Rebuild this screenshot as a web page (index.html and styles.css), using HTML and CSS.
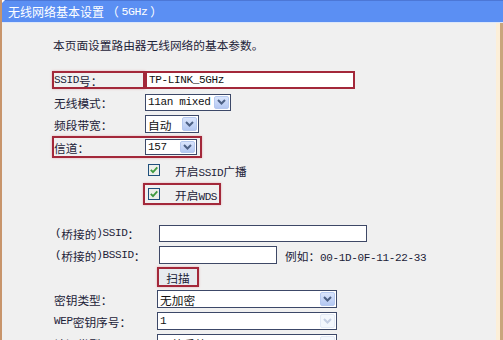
FILE: index.html
```html
<!DOCTYPE html>
<html lang="zh-CN">
<head>
<meta charset="utf-8">
<title>无线网络基本设置</title>
<link rel="stylesheet" href="styles.css">
</head>
<body>
<div class="page">
  <div class="header">无线网络基本设置 （ <span class="en">5GHz</span> ）</div>
  <div class="content">
    <p class="intro">本页面设置路由器无线网络的基本参数。</p>

    <div class="row">
      <span class="label hl"><span class="en">SSID</span>号：</span>
      <input class="field en ssid" value="TP-LINK_5GHz">
    </div>
    <div class="row">
      <span class="label">无线模式：</span>
      <div class="select w-mode"><span class="val en">11an mixed</span><span class="arrow"><svg width="9" height="6" viewBox="0 0 9 6"><path d="M1 1 L4.5 4.5 L8 1" fill="none" stroke="#4d6185" stroke-width="2"/></svg></span></div>
    </div>
    <div class="row">
      <span class="label">频段带宽：</span>
      <div class="select w-band"><span class="val">自动</span><span class="arrow"><svg width="9" height="6" viewBox="0 0 9 6"><path d="M1 1 L4.5 4.5 L8 1" fill="none" stroke="#4d6185" stroke-width="2"/></svg></span></div>
    </div>
    <div class="row tall">
      <div class="hl-group">
        <span class="label">信道：</span>
        <div class="select w-chan"><span class="val en">157</span><span class="arrow"><svg width="9" height="6" viewBox="0 0 9 6"><path d="M1 1 L4.5 4.5 L8 1" fill="none" stroke="#4d6185" stroke-width="2"/></svg></span></div>
      </div>
    </div>
    <div class="row check-row">
      <div class="check">
        <svg class="box" width="12" height="12" viewBox="0 0 12 12"><rect x="0.5" y="0.5" width="11" height="11" fill="#ecefea" stroke="#1f4f7c"/><path d="M2.8 5.8 L5 8.2 L9.3 3.4" fill="none" stroke="#3f9a3f" stroke-width="1.8"/></svg>
        <span>开启<span class="en">SSID</span>广播</span>
      </div>
    </div>
    <div class="row check-row taller">
      <div class="check hl">
        <svg class="box" width="12" height="12" viewBox="0 0 12 12"><rect x="0.5" y="0.5" width="11" height="11" fill="#ecefea" stroke="#1f4f7c"/><path d="M2.8 5.8 L5 8.2 L9.3 3.4" fill="none" stroke="#3f9a3f" stroke-width="1.8"/></svg>
        <span>开启<span class="en">WDS</span></span>
      </div>
    </div>

    <div class="row gap-top">
      <span class="label bridge"><span class="en">(</span>桥接的<span class="en">)SSID</span>：</span>
      <input class="field en w-bssid-name" value="">
    </div>
    <div class="row">
      <span class="label bridge"><span class="en">(</span>桥接的<span class="en">)BSSID</span>：</span>
      <input class="field en w-bssid" value="">
      <span class="hint">例如：<span class="en">00-1D-0F-11-22-33</span></span>
    </div>
    <div class="row">
      <button class="scan">扫描</button>
    </div>
    <div class="row">
      <span class="label key">密钥类型：</span>
      <div class="select w-key"><span class="val">无加密</span><span class="arrow"><svg width="9" height="6" viewBox="0 0 9 6"><path d="M1 1 L4.5 4.5 L8 1" fill="none" stroke="#4d6185" stroke-width="2"/></svg></span></div>
    </div>
    <div class="row">
      <span class="label key"><span class="en">WEP</span>密钥序号：</span>
      <div class="select w-key"><span class="val en">1</span><span class="arrow off"><svg width="9" height="6" viewBox="0 0 9 6"><path d="M1 1 L4.5 4.5 L8 1" fill="none" stroke="#c3cee2" stroke-width="2"/></svg></span></div>
    </div>
    <div class="row">
      <span class="label key">认证类型：</span>
      <div class="select w-key"><span class="val">开放系统</span><span class="arrow off"><svg width="9" height="6" viewBox="0 0 9 6"><path d="M1 1 L4.5 4.5 L8 1" fill="none" stroke="#c3cee2" stroke-width="2"/></svg></span></div>
    </div>
  </div>
</div>
</body>
</html>
```

FILE: styles.css
```css
html, body {
  margin: 0;
  padding: 0;
}

body {
  font-family: "Noto Sans CJK SC", sans-serif;
  font-size: 11.7px;
  color: #1c2238;
  background: #f0f0f0;
}

.en {
  font-family: "Liberation Mono", monospace;
  font-size: 11px;
  letter-spacing: -0.36px;
}

.page {
  position: relative;
  width: 503px;
  height: 340px;
  overflow: hidden;
  box-sizing: border-box;
  border-left: 2px solid #c8956b;
  display: flex;
  flex-direction: column;
}

.page::before {
  content: "";
  position: absolute;
  left: -2px;
  top: 0;
  border-top: 5px solid #ffffff;
  border-right: 5px solid transparent;
}

.header {
  flex: none;
  height: 23px;
  box-sizing: border-box;
  background: #5b8ff3;
  border-top: 1px solid #4c77d6;
  border-bottom: 1px solid #dce7fa;
  color: #ffffff;
  font-size: 12px;
  padding-left: 6px;
  display: flex;
  align-items: center;
  white-space: pre;
}

.header .en {
  font-size: 11.5px;
}

.content {
  flex: 1;
  border-right: 3px solid #c9a57c;
  box-shadow: inset -4px 0 0 #fcefd9;
  padding-left: 50px;
}

.intro {
  margin: 12px 0 14px;
  line-height: 20px;
  padding-left: 1px;
}

.row {
  display: flex;
  align-items: center;
  height: 22px;
}

.row.tall {
  height: 24px;
}

.row.taller {
  height: 26px;
}

.row.gap-top {
  margin-top: 15px;
}

.label {
  box-sizing: border-box;
  width: 93px;
  height: 18px;
  border: 2px solid transparent;
  display: flex;
  align-items: center;
  white-space: nowrap;
}

.label.hl,
.check.hl,
.hl-group,
.scan {
  border: 2px solid #a3283a;
  box-shadow: 0 0 2px rgba(220, 120, 130, 0.6);
}

.label.bridge {
  width: 107px;
  padding-left: 1px;
}

.label.key {
  width: 105px;
}

.field {
  box-sizing: border-box;
  height: 17px;
  border: 1px solid #3e4866;
  background: #ffffff;
  padding: 0 2px;
  margin: 0;
  color: #111;
  outline: none;
}

.field.ssid {
  width: 210px;
  height: 18px;
  border: 2px solid #a3283a;
}

.w-bssid-name {
  width: 208px;
}

.w-bssid {
  width: 118px;
  height: 18px;
}

.hint {
  margin-left: 8px;
  white-space: nowrap;
}

.select {
  box-sizing: border-box;
  display: flex;
  align-items: center;
  height: 18px;
  border: 1px solid #3c4868;
  background: #ffffff;
  padding-left: 2px;
  color: #111;
}

.select .val {
  flex: 1;
  white-space: nowrap;
}

.w-mode {
  width: 86px;
  height: 17px;
}

.w-band {
  width: 54px;
}

.w-chan {
  width: 52px;
  height: 16px;
}

.w-key {
  width: 180px;
}

.arrow {
  box-sizing: border-box;
  width: 15px;
  align-self: stretch;
  margin: 1px 1px 1px 0;
  border: 1px solid #b5c8ef;
  border-radius: 2px;
  background: linear-gradient(#dae5fc, #b4c8f2);
  display: flex;
  align-items: center;
  justify-content: center;
}

.arrow.off {
  background: #f3f7fc;
  border-color: #e2e9f5;
}

.hl-group {
  box-sizing: border-box;
  display: flex;
  align-items: center;
  height: 22px;
  padding-right: 3px;
}

.hl-group .label {
  border: 0;
  width: 91px;
}

.check-row {
  padding-left: 91px;
}

.check {
  box-sizing: border-box;
  display: flex;
  align-items: center;
  gap: 15px;
  height: 22px;
  border: 2px solid transparent;
  padding: 0 2px 0 3px;
  white-space: nowrap;
}

.check .box {
  display: block;
  flex: none;
}

.row .scan {
  margin-left: 105px;
}

.scan {
  box-sizing: border-box;
  width: 42px;
  height: 20px;
  padding: 0;
  background: #e7ebef;
  font-family: "Noto Sans CJK SC", sans-serif;
  font-size: 11.7px;
  color: #1c2238;
}
```
